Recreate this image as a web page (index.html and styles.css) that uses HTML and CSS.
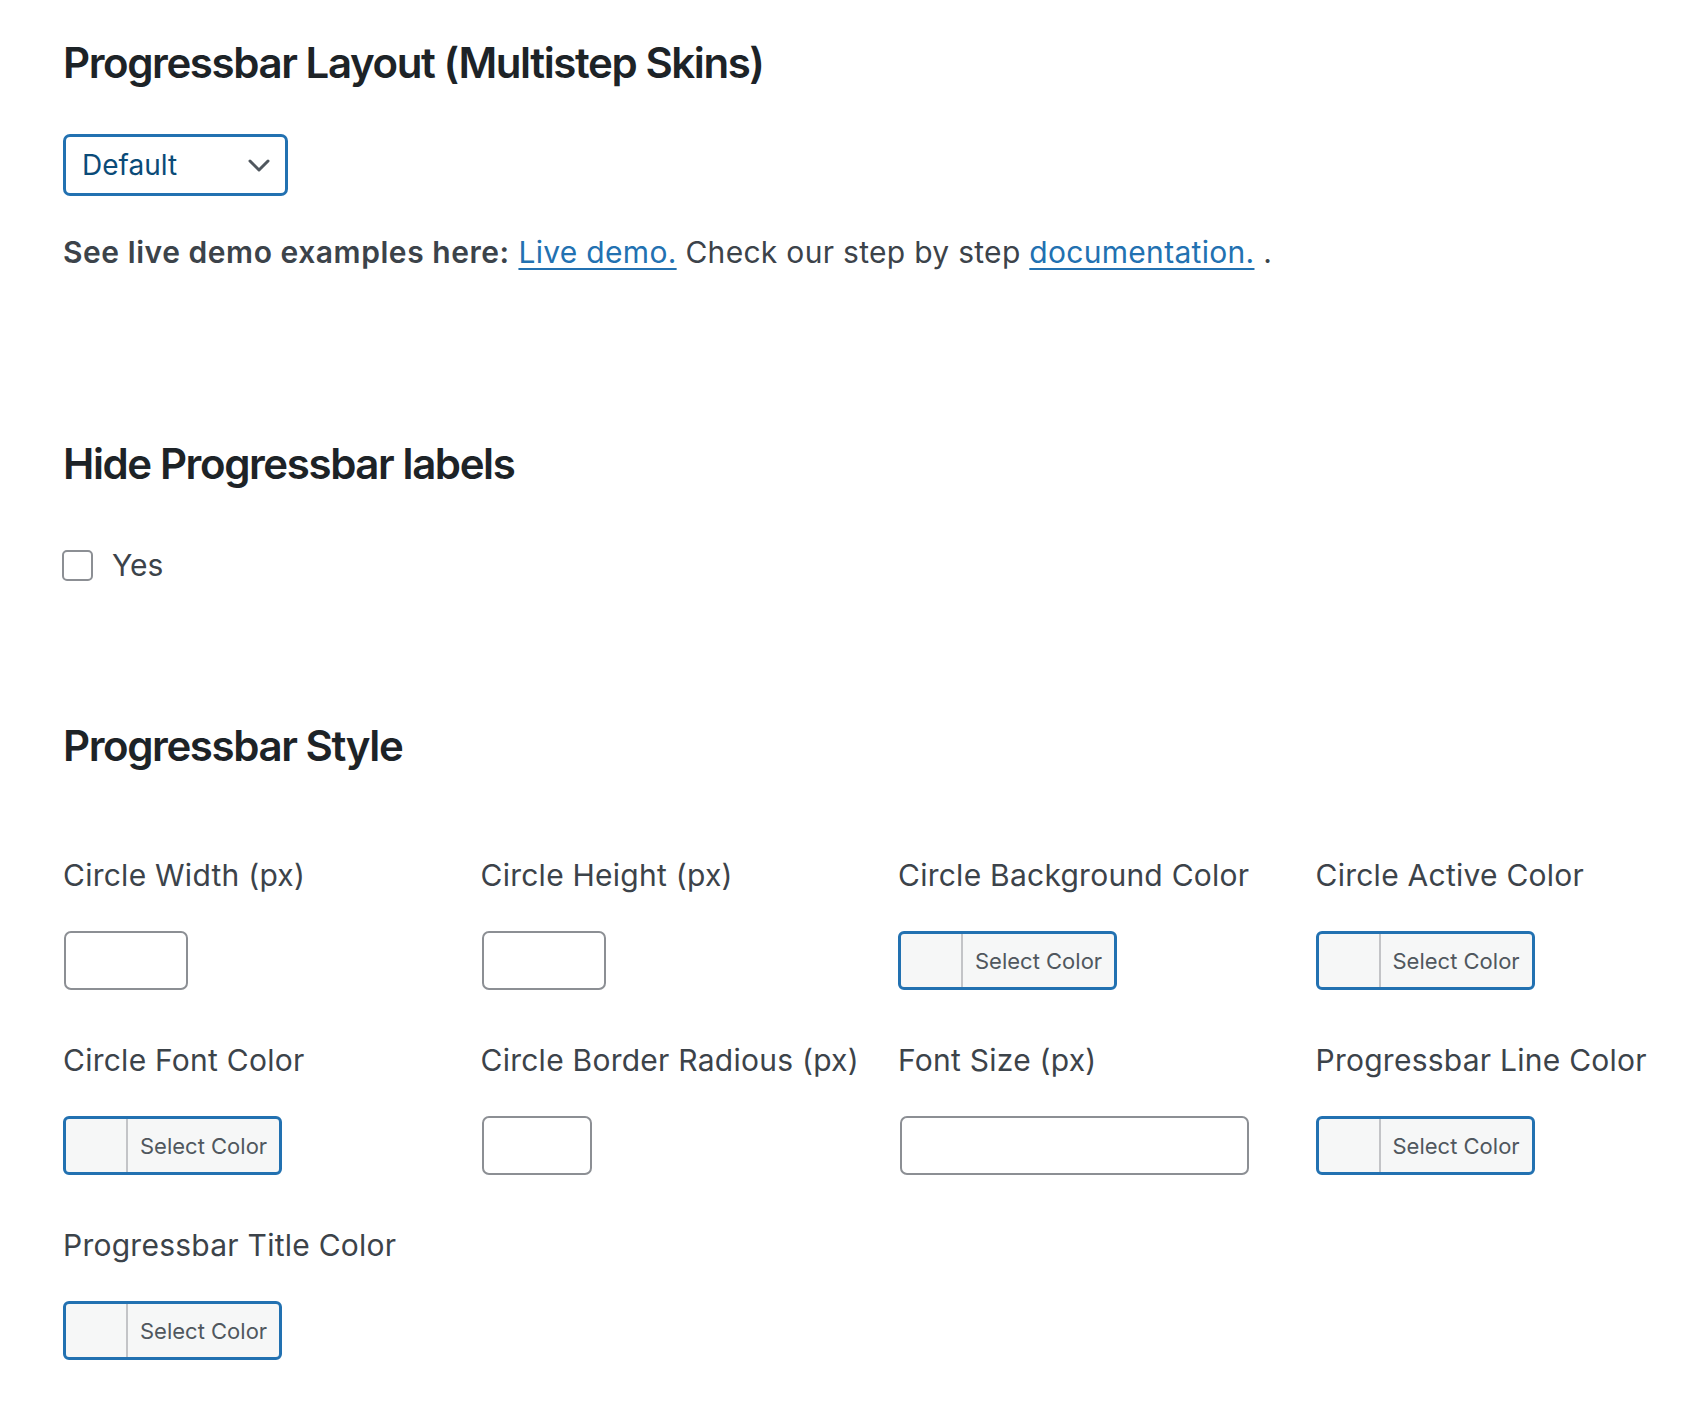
FILE: index.html
```html
<!DOCTYPE html>
<html lang="en">
<head>
    <meta charset="UTF-8">
    <meta name="viewport" content="width=device-width, initial-scale=1.0">
    <title>Progressbar Settings</title>
<link rel="stylesheet" href="styles.css">
</head>
<body>
    <div class="settings">

        <h2 class="section-title title-first">Progressbar Layout (Multistep Skins)</h2>

        <div class="select-wrap">
            <select class="layout-select">
                <option>Default</option>
            </select>
            <svg class="select-arrow" width="22" height="13" viewBox="0 0 22 13">
                <path d="M2 2 L11 11 L20 2" fill="none" stroke="#50575e" stroke-width="3" stroke-linecap="round" stroke-linejoin="round"/>
            </svg>
        </div>

        <p class="demo-line">
            <strong>See live demo examples here:</strong> <a href="#">Live demo.</a> Check our step by step <a href="#">documentation.</a> .
        </p>

        <h2 class="section-title title-labels">Hide Progressbar labels</h2>

        <label class="check-row">
            <input type="checkbox" class="check-box">
            <span>Yes</span>
        </label>

        <h2 class="section-title title-style">Progressbar Style</h2>

        <div class="field-grid">
            <div class="field">
                <div class="field-label">Circle Width (px)</div>
                <input type="text" class="text-input input-small">
            </div>
            <div class="field">
                <div class="field-label">Circle Height (px)</div>
                <input type="text" class="text-input input-small">
            </div>
            <div class="field">
                <div class="field-label">Circle Background Color</div>
                <button class="color-btn"><span class="swatch"></span><span class="color-text">Select Color</span></button>
            </div>
            <div class="field">
                <div class="field-label">Circle Active Color</div>
                <button class="color-btn"><span class="swatch"></span><span class="color-text">Select Color</span></button>
            </div>

            <div class="field">
                <div class="field-label">Circle Font Color</div>
                <button class="color-btn"><span class="swatch"></span><span class="color-text">Select Color</span></button>
            </div>
            <div class="field">
                <div class="field-label">Circle Border Radious (px)</div>
                <input type="text" class="text-input input-tiny">
            </div>
            <div class="field">
                <div class="field-label">Font Size (px)</div>
                <input type="text" class="text-input input-wide">
            </div>
            <div class="field">
                <div class="field-label">Progressbar Line Color</div>
                <button class="color-btn"><span class="swatch"></span><span class="color-text">Select Color</span></button>
            </div>

            <div class="field">
                <div class="field-label">Progressbar Title Color</div>
                <button class="color-btn"><span class="swatch"></span><span class="color-text">Select Color</span></button>
            </div>
        </div>

    </div>
</body>
</html>
```

FILE: styles.css
```css
body{
    margin: 0;
    background: #fff;
    font-family: Inter, "Noto Sans", sans-serif;
    color: #3c434a;
}

.settings{
    padding: 38px 0 40px 63px;
}

.section-title{
    margin: 0;
    font-size: 42px;
    line-height: 50px;
    font-weight: 600;
    color: #1d2327;
    letter-spacing: -1.4px;
}

.title-labels{
    margin-top: 167px;
}

.title-style{
    margin-top: 136px;
}

/* layout select */
.select-wrap{
    position: relative;
    width: 225px;
    margin-top: 46px;
}

.layout-select{
    appearance: none;
    -webkit-appearance: none;
    display: block;
    width: 225px;
    height: 62px;
    padding: 0 0 0 16px;
    border: 3px solid #2271b1;
    border-radius: 7px;
    background: #fff;
    font-family: inherit;
    font-size: 28px;
    color: #0a4b78;
    outline: none;
}

.select-arrow{
    position: absolute;
    left: 185px;
    top: 25px;
    pointer-events: none;
}

.demo-line{
    margin: 36px 0 0;
    font-size: 30px;
    line-height: 40px;
    letter-spacing: 0.3px;
}

.demo-line strong{
    font-weight: 600;
    letter-spacing: 0.55px;
}

.demo-line a{
    color: #2271b1;
    text-decoration: underline;
    text-underline-offset: 5px;
    text-decoration-thickness: 2px;
}

/* checkbox */
.check-row{
    display: flex;
    align-items: center;
    gap: 19px;
    margin-top: 56px;
    height: 40px;
    font-size: 30px;
}

.check-box{
    appearance: none;
    -webkit-appearance: none;
    width: 31px;
    height: 31px;
    margin: 0 0 0 -1px;
    border: 2px solid #8c8f94;
    border-radius: 5px;
    background: #fff;
}

/* style fields */
.field-grid{
    display: grid;
    grid-template-columns: repeat(4, 417.5px);
    row-gap: 50px;
    margin-top: 84px;
}

.field-label{
    font-size: 30px;
    line-height: 40px;
    letter-spacing: 0.25px;
    white-space: nowrap;
}

.text-input{
    display: block;
    box-sizing: border-box;
    height: 59px;
    margin-top: 36px;
    border: 2px solid #8c8f94;
    border-radius: 7px;
    background: #fff;
}

.input-small{
    width: 124px;
    margin-left: 1px;
}

.input-tiny{
    width: 110px;
    margin-left: 1px;
}

.input-wide{
    width: 349px;
    margin-left: 2px;
}

.color-btn{
    display: flex;
    box-sizing: border-box;
    width: 219px;
    height: 59px;
    margin-top: 36px;
    padding: 0;
    border: 3px solid #2271b1;
    border-radius: 6px;
    background: #f6f7f7;
    font-family: inherit;
    cursor: pointer;
}

.swatch{
    width: 60px;
    height: 100%;
    border-right: 2px solid #c3c4c7;
}

.color-text{
    display: flex;
    align-items: center;
    padding-left: 12px;
    font-size: 22px;
    color: #50575e;
    white-space: nowrap;
}
```
